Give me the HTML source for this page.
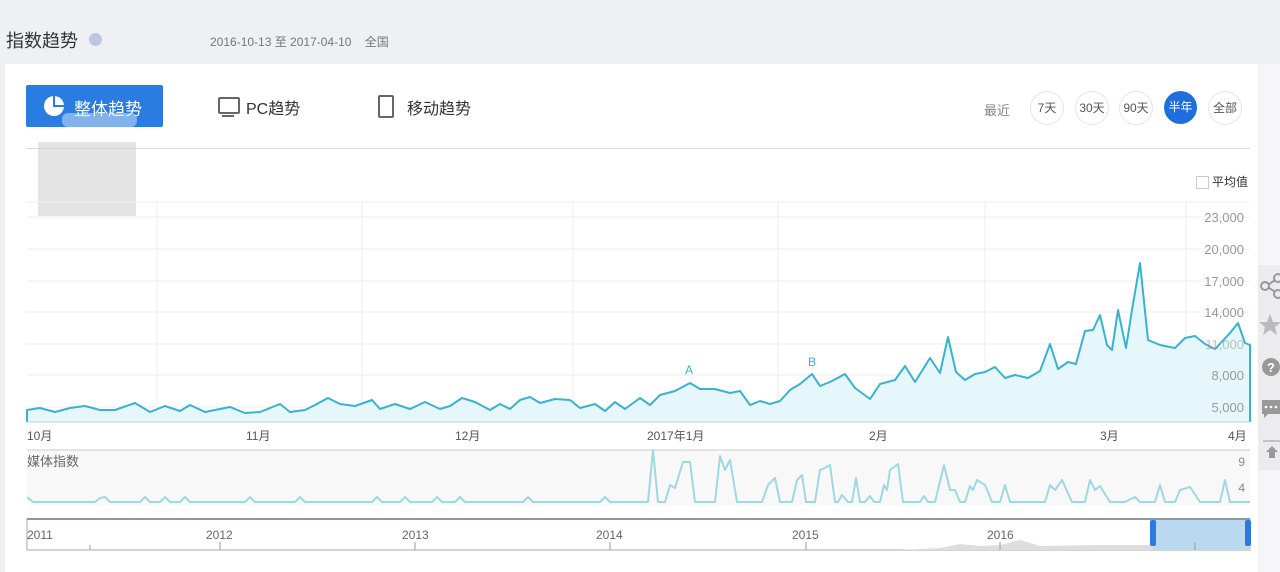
<!DOCTYPE html><html><head><meta charset="utf-8"><style>
body{margin:0;width:1280px;height:572px;background:#eff0f4;font-family:"Liberation Sans","Noto Sans CJK SC",sans-serif;position:relative;overflow:hidden}
.a{position:absolute;white-space:nowrap}
</style></head><body>
<div class="a" style="left:6px;top:27px;font-size:18px;color:#333">指数趋势</div>
<div class="a" style="left:89px;top:33px;width:13px;height:13px;border-radius:50%;background:#b9c8dc"></div>
<div class="a" style="left:210px;top:33px;font-size:12px;color:#777">2016-10-13 至 2017-04-10 &nbsp;&nbsp; 全国</div>
<div class="a" style="left:5px;top:64px;width:1253px;height:508px;background:#fff"></div>
<div class="a" style="left:1258px;top:64px;width:22px;height:508px;background:#f6f6f8"></div>
<div class="a" style="left:1258px;top:265px;width:22px;height:205px;background:#ececee"></div>
<div class="a" style="left:26px;top:85px;width:137px;height:42px;background:#2a7ce0;border-radius:2px"></div>
<svg class="a" style="left:43px;top:95px" width="22" height="22"><circle cx="11" cy="11" r="10" fill="#fff"/><path d="M11,1 L11,11 L21,11" fill="none" stroke="#2a7ce0" stroke-width="2"/></svg>
<div class="a" style="left:74px;top:95px;font-size:17px;color:#fff">整体趋势</div>
<div class="a" style="left:62px;top:113px;width:75px;height:14px;background:#d8e8f8;opacity:.5;border-radius:6px"></div>
<div class="a" style="left:218px;top:97px;width:18px;height:13px;border:2px solid #666;border-radius:2px"></div>
<div class="a" style="left:222px;top:115px;width:12px;height:2px;background:#666"></div>
<div class="a" style="left:246px;top:95px;font-size:16px;color:#333">PC趋势</div>
<div class="a" style="left:378px;top:95px;width:12px;height:19px;border:2px solid #666;border-radius:2px"></div>
<div class="a" style="left:407px;top:95px;font-size:16px;color:#333">移动趋势</div>
<div class="a" style="left:984px;top:100px;font-size:13px;color:#888">最近</div>
<div class="a" style="left:1030px;top:91px;width:32px;height:32px;border-radius:50%;border:1px solid #e5e5e5;font-size:12px;line-height:32px;text-align:center;color:#555">7天</div>
<div class="a" style="left:1075px;top:91px;width:32px;height:32px;border-radius:50%;border:1px solid #e5e5e5;font-size:12px;line-height:32px;text-align:center;color:#555">30天</div>
<div class="a" style="left:1119px;top:91px;width:32px;height:32px;border-radius:50%;border:1px solid #e5e5e5;font-size:12px;line-height:32px;text-align:center;color:#555">90天</div>
<div class="a" style="left:1164px;top:91px;width:33px;height:33px;border-radius:50%;background:#1e6fdc;font-size:12px;line-height:33px;text-align:center;color:#fff">半年</div>
<div class="a" style="left:1208px;top:91px;width:32px;height:32px;border-radius:50%;border:1px solid #e5e5e5;font-size:12px;line-height:32px;text-align:center;color:#555">全部</div>
<div class="a" style="left:26px;top:148px;width:1224px;height:1px;background:#ddd"></div>
<div class="a" style="left:38px;top:142px;width:98px;height:74px;background:#d2d2d2;opacity:.6"></div>
<div class="a" style="left:1196px;top:176px;width:11px;height:11px;border:1px solid #ccc"></div>
<div class="a" style="left:1212px;top:173px;font-size:12px;color:#333">平均值</div>
<svg class="a" style="left:0;top:0" width="1280" height="572">
<g stroke="#eee" stroke-width="1">
<line x1="27" y1="202" x2="1250" y2="202"/><line x1="27" y1="217" x2="1250" y2="217"/><line x1="27" y1="249" x2="1250" y2="249"/><line x1="27" y1="281" x2="1250" y2="281"/><line x1="27" y1="312" x2="1250" y2="312"/><line x1="27" y1="344" x2="1250" y2="344"/><line x1="27" y1="375" x2="1250" y2="375"/><line x1="27" y1="407" x2="1250" y2="407"/>
<line x1="157" y1="202" x2="157" y2="422"/><line x1="362" y1="202" x2="362" y2="422"/><line x1="573" y1="202" x2="573" y2="422"/><line x1="778" y1="202" x2="778" y2="422"/><line x1="985" y1="202" x2="985" y2="422"/><line x1="1186" y1="202" x2="1186" y2="422"/>
</g>
<polyline fill="#e6f7fc" stroke="#3bb2cc" stroke-width="2" stroke-linejoin="round" points="27,422 27,410 40,408 55,412 70,408 85,406 100,410 115,410 135,403 150,412 165,406 180,411 190,405 205,412 215,410 230,407 245,413 260,412 280,404 290,412 305,410 315,405 328,398 340,404 355,406 372,400 380,409 395,404 410,409 425,402 440,409 450,406 462,398 475,402 490,410 500,404 510,409 520,400 530,397 540,403 555,399 570,400 580,408 595,404 605,411 615,402 625,409 640,398 650,405 660,395 675,391 690,383 700,389 715,389 730,393 740,391 750,405 760,401 770,404 780,401 790,390 800,384 812,374 820,386 830,382 845,374 855,388 870,399 880,384 895,380 905,366 915,382 930,358 940,373 948,337 956,372 965,380 975,374 985,372 995,367 1005,378 1015,375 1028,378 1040,371 1050,344 1058,369 1068,362 1076,364 1085,331 1093,330 1100,315 1107,345 1112,350 1118,310 1126,348 1132,310 1140,263 1148,340 1160,345 1175,348 1185,338 1195,336 1205,344 1215,349 1230,333 1238,323 1245,343 1250,345 1250,422"/>
<g font-size="13" fill="#999" text-anchor="end" font-family="Liberation Sans">
<text x="1244" y="222">23,000</text><text x="1244" y="254">20,000</text><text x="1244" y="286">17,000</text><text x="1244" y="317">14,000</text><text x="1244" y="349" fill-opacity=".6">11,000</text><text x="1244" y="380">8,000</text><text x="1244" y="412">5,000</text></g>
<line x1="27" y1="422" x2="1250" y2="422" stroke="#ccc"/>
<text x="689" y="374" font-size="12" fill="#3bb2cc" text-anchor="middle">A</text>
<text x="812" y="366" font-size="12" fill="#3bb2cc" text-anchor="middle">B</text>
<g font-size="12" fill="#555" font-family="Liberation Sans,Noto Sans CJK SC"><text x="27" y="440">10月</text><text x="246" y="440">11月</text><text x="455" y="440">12月</text><text x="647" y="440">2017年1月</text><text x="869" y="440">2月</text><text x="1100" y="440">3月</text><text x="1228" y="440">4月</text></g>
<rect x="27" y="450" width="1223" height="55" fill="#f8f8f8"/>
<line x1="27" y1="450" x2="1250" y2="450" stroke="#ccc"/>
<text x="27" y="466" font-size="13" fill="#666">媒体指数</text>
<text x="1245" y="466" font-size="12" fill="#888" text-anchor="end">9</text>
<text x="1245" y="492" font-size="12" fill="#888" text-anchor="end">4</text>
<polyline fill="none" stroke="#9fd8e2" stroke-width="2" stroke-linejoin="round" points="27,497 33,502 95,502 100,498 105,497 110,502 140,502 145,497 150,502 160,502 165,497 170,502 180,502 185,497 190,502 245,502 250,497 255,502 295,502 300,497 305,502 372,502 377,497 382,502 400,502 405,497 410,502 432,502 437,497 442,502 455,502 460,497 465,502 523,502 528,497 533,502 600,502 605,497 610,502 648,502 653,450 658,502 665,502 670,485 675,488 683,462 690,462 695,502 715,502 720,456 725,470 730,460 737,502 762,502 768,485 775,478 780,502 792,502 797,480 802,475 806,502 815,502 820,470 825,468 830,465 835,502 838,502 842,495 848,502 852,502 856,478 860,502 865,502 870,496 874,502 880,502 884,485 887,490 890,470 898,464 903,502 920,502 924,496 928,502 935,502 944,465 950,490 955,490 960,502 965,502 970,486 973,490 977,480 985,485 992,502 1000,502 1005,485 1010,502 1045,502 1050,485 1055,490 1062,480 1072,502 1085,502 1090,480 1095,490 1100,486 1110,502 1125,502 1135,497 1140,502 1155,502 1160,485 1165,502 1175,502 1180,490 1190,487 1200,502 1220,502 1225,480 1230,502 1250,502"/>
<rect x="27" y="519" width="1223" height="31" fill="#fff" stroke="#aaa"/>
<line x1="27" y1="519" x2="1250" y2="519" stroke="#8a9aa4" stroke-width="2"/>
<path d="M900,550 L940,548 L960,544 L980,546 L1000,545 L1020,540 L1040,546 L1100,545 L1153,545 L1153,550Z" fill="#ddd"/>
<rect x="1153" y="520" width="97" height="30" fill="#bcd9f2"/>
<rect x="1150" y="520" width="6" height="26" rx="2" fill="#2a7ce0"/><rect x="1245" y="520" width="6" height="26" rx="2" fill="#2a7ce0"/>
<g font-size="12" fill="#666"><text x="27" y="539">2011</text><text x="206" y="539">2012</text><text x="402" y="539">2013</text><text x="596" y="539">2014</text><text x="792" y="539">2015</text><text x="987" y="539">2016</text></g>
<g stroke="#999"><line x1="90" y1="545" x2="90" y2="550"/><line x1="220" y1="542" x2="220" y2="550"/><line x1="415" y1="542" x2="415" y2="550"/><line x1="610" y1="542" x2="610" y2="550"/><line x1="806" y1="542" x2="806" y2="550"/><line x1="1000" y1="542" x2="1000" y2="550"/><line x1="1195" y1="542" x2="1195" y2="550"/></g>
<g fill="#999" stroke="#999">
<path d="M1277,279 L1266,286 L1277,293" fill="none" stroke-width="2"/>
<circle cx="1265" cy="286" r="4" fill="#ececee" stroke-width="2"/><circle cx="1278" cy="278" r="4" fill="#ececee" stroke-width="2"/><circle cx="1278" cy="294" r="4" fill="#ececee" stroke-width="2"/>
<path d="M1270,314 l3,8 8,0 -6,5 2,8 -7,-5 -7,5 2,-8 -6,-5 8,0z" stroke="none" fill="#bbb"/>
<circle cx="1271" cy="367" r="9" stroke="none"/>
<path d="M1262,400 h18 v14 h-12 l-4,4 v-4 h-2z" stroke="none"/>
<line x1="1263" y1="441" x2="1280" y2="441" stroke="#999"/>
<path d="M1266,452 l6,-6 6,6 -3,0 0,6 -6,0 0,-6z" stroke="none"/>
</g>
<text x="1271" y="372" font-size="13" font-weight="bold" fill="#fff" text-anchor="middle">?</text>
<g fill="#fff"><circle cx="1266" cy="407" r="1.3"/><circle cx="1271" cy="407" r="1.3"/><circle cx="1276" cy="407" r="1.3"/></g>
</svg>
</body></html>
